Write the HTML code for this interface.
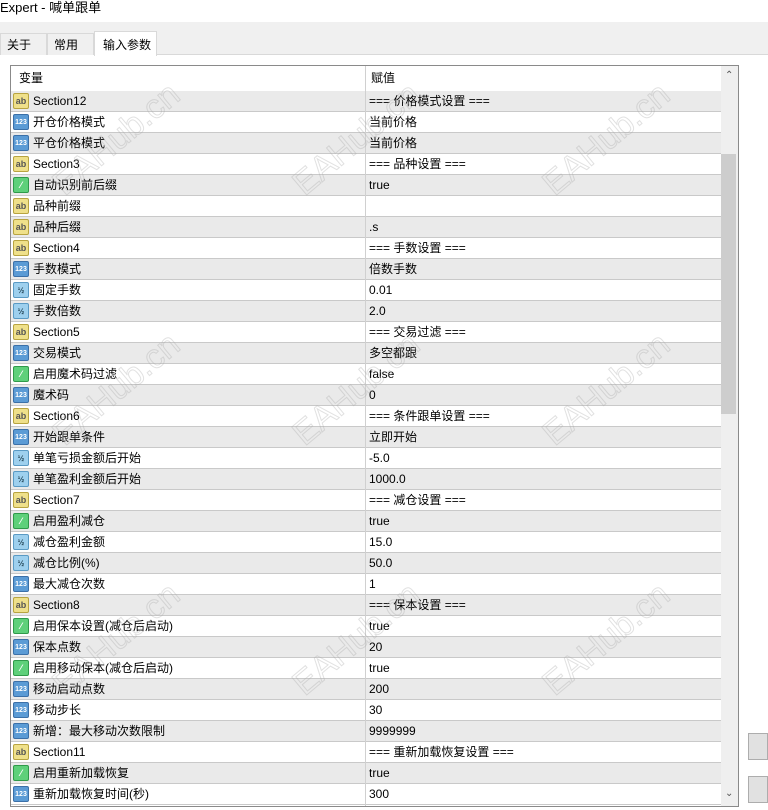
<!DOCTYPE html>
<html><head><meta charset="utf-8">
<style>
*{margin:0;padding:0;box-sizing:border-box}
body{width:768px;height:810px;background:#fff;font-family:"Liberation Sans","Noto Sans CJK SC",sans-serif;font-size:12px;color:#000;position:relative;overflow:hidden}
.title{position:absolute;left:0;top:0;height:22px;line-height:16px;font-size:13px}
.band{position:absolute;left:0;top:22px;width:768px;height:33px;background:#f0f0f0;border-bottom:1px solid #d9d9d9}
.tab{position:absolute;top:33px;height:22px;border:1px solid #d9d9d9;border-bottom:none;background:#f0f0f0;line-height:22px;padding-left:6px;font-size:12px}
.tab.a{top:31px;height:25px;background:#fff;line-height:26px;padding-left:8px}
.list{position:absolute;left:10px;top:65px;width:729px;height:742px;border:1px solid #8a8a8a;overflow:hidden}
.hdr{position:absolute;left:0;top:0;width:710px;height:25px;background:#fff}
.hdr span{position:absolute;top:0;line-height:24px;height:24px}
.row{position:absolute;left:0;width:710px;height:21px;border-bottom:1px solid #c9c9c9}
.g{background:#eaeaea}
.row .n,.row .v{position:absolute;top:0;height:20px;line-height:20px;white-space:nowrap}
.row .n{left:22px}
.row .v{left:358px}
.row .ic{position:absolute;left:2px;top:2px;width:16px;height:16px;border-radius:2px;font-size:9px;font-weight:bold;line-height:15px;text-align:center;font-family:"Liberation Sans",sans-serif}
.s{background:#efe08a;border:1px solid #b8a440;color:#555}
.i{background:#5b9bd5;border:1px solid #3b70a8;color:#fff;font-size:7px!important}
.d{background:#9ed0ee;border:1px solid #5a9ac4;color:#245;font-size:8px!important}
.b{background:#5ed07a;border:1px solid #2f9a4a;color:#fff}
.col{position:absolute;left:354px;top:0;width:1px;height:742px;background:#d0d0d0}
.sb{position:absolute;left:710px;top:0;width:17px;height:740px;background:#efefef}
.th{position:absolute;left:710px;top:88px;width:15px;height:260px;background:#cdcdcd}
.btn{position:absolute;left:748px;width:20px;height:27px;background:#e1e1e1;border:1px solid #adadad}
.wm{position:absolute;font-size:34px;font-family:"Liberation Sans",sans-serif;color:rgba(255,255,255,0);-webkit-text-stroke:1px rgba(170,170,170,.35);transform:rotate(-40deg);white-space:nowrap;pointer-events:none}
</style></head><body>
<div class="title">Expert - 喊单跟单</div>
<div class="band"></div>
<div class="tab" style="left:0;width:47px">关于</div>
<div class="tab" style="left:47px;width:47px">常用</div>
<div class="tab a" style="left:94px;width:63px">输入参数</div>
<div class="list">
<div class="hdr"><span style="left:8px">变量</span><span style="left:360px">赋值</span></div>
<div class="row g" style="top:25px"><div class="ic s">ab</div><span class="n">Section12</span><span class="v">=== 价格模式设置 ===</span></div>
<div class="row" style="top:46px"><div class="ic i">123</div><span class="n">开仓价格模式</span><span class="v">当前价格</span></div>
<div class="row g" style="top:67px"><div class="ic i">123</div><span class="n">平仓价格模式</span><span class="v">当前价格</span></div>
<div class="row" style="top:88px"><div class="ic s">ab</div><span class="n">Section3</span><span class="v">=== 品种设置 ===</span></div>
<div class="row g" style="top:109px"><div class="ic b">⁄</div><span class="n">自动识别前后缀</span><span class="v">true</span></div>
<div class="row" style="top:130px"><div class="ic s">ab</div><span class="n">品种前缀</span><span class="v"></span></div>
<div class="row g" style="top:151px"><div class="ic s">ab</div><span class="n">品种后缀</span><span class="v">.s</span></div>
<div class="row" style="top:172px"><div class="ic s">ab</div><span class="n">Section4</span><span class="v">=== 手数设置 ===</span></div>
<div class="row g" style="top:193px"><div class="ic i">123</div><span class="n">手数模式</span><span class="v">倍数手数</span></div>
<div class="row" style="top:214px"><div class="ic d">½</div><span class="n">固定手数</span><span class="v">0.01</span></div>
<div class="row g" style="top:235px"><div class="ic d">½</div><span class="n">手数倍数</span><span class="v">2.0</span></div>
<div class="row" style="top:256px"><div class="ic s">ab</div><span class="n">Section5</span><span class="v">=== 交易过滤 ===</span></div>
<div class="row g" style="top:277px"><div class="ic i">123</div><span class="n">交易模式</span><span class="v">多空都跟</span></div>
<div class="row" style="top:298px"><div class="ic b">⁄</div><span class="n">启用魔术码过滤</span><span class="v">false</span></div>
<div class="row g" style="top:319px"><div class="ic i">123</div><span class="n">魔术码</span><span class="v">0</span></div>
<div class="row" style="top:340px"><div class="ic s">ab</div><span class="n">Section6</span><span class="v">=== 条件跟单设置 ===</span></div>
<div class="row g" style="top:361px"><div class="ic i">123</div><span class="n">开始跟单条件</span><span class="v">立即开始</span></div>
<div class="row" style="top:382px"><div class="ic d">½</div><span class="n">单笔亏损金额后开始</span><span class="v">-5.0</span></div>
<div class="row g" style="top:403px"><div class="ic d">½</div><span class="n">单笔盈利金额后开始</span><span class="v">1000.0</span></div>
<div class="row" style="top:424px"><div class="ic s">ab</div><span class="n">Section7</span><span class="v">=== 减仓设置 ===</span></div>
<div class="row g" style="top:445px"><div class="ic b">⁄</div><span class="n">启用盈利减仓</span><span class="v">true</span></div>
<div class="row" style="top:466px"><div class="ic d">½</div><span class="n">减仓盈利金额</span><span class="v">15.0</span></div>
<div class="row g" style="top:487px"><div class="ic d">½</div><span class="n">减仓比例(%)</span><span class="v">50.0</span></div>
<div class="row" style="top:508px"><div class="ic i">123</div><span class="n">最大减仓次数</span><span class="v">1</span></div>
<div class="row g" style="top:529px"><div class="ic s">ab</div><span class="n">Section8</span><span class="v">=== 保本设置 ===</span></div>
<div class="row" style="top:550px"><div class="ic b">⁄</div><span class="n">启用保本设置(减仓后启动)</span><span class="v">true</span></div>
<div class="row g" style="top:571px"><div class="ic i">123</div><span class="n">保本点数</span><span class="v">20</span></div>
<div class="row" style="top:592px"><div class="ic b">⁄</div><span class="n">启用移动保本(减仓后启动)</span><span class="v">true</span></div>
<div class="row g" style="top:613px"><div class="ic i">123</div><span class="n">移动启动点数</span><span class="v">200</span></div>
<div class="row" style="top:634px"><div class="ic i">123</div><span class="n">移动步长</span><span class="v">30</span></div>
<div class="row g" style="top:655px"><div class="ic i">123</div><span class="n">新增：最大移动次数限制</span><span class="v">9999999</span></div>
<div class="row" style="top:676px"><div class="ic s">ab</div><span class="n">Section11</span><span class="v">=== 重新加载恢复设置 ===</span></div>
<div class="row g" style="top:697px"><div class="ic b">⁄</div><span class="n">启用重新加载恢复</span><span class="v">true</span></div>
<div class="row" style="top:718px"><div class="ic i">123</div><span class="n">重新加载恢复时间(秒)</span><span class="v">300</span></div>
<div class="col"></div>
<div class="sb"></div><div class="th"></div>
<div style="position:absolute;left:714px;top:4px;font-size:10px;color:#555">&#8963;</div>
<div style="position:absolute;left:714px;top:722px;font-size:10px;color:#555">&#8964;</div>
</div>
<div class="btn" style="top:733px"></div>
<div class="btn" style="top:776px"></div>
<div class="wm" style="left:40px;top:120px">EAHub.cn</div>
<div class="wm" style="left:280px;top:120px">EAHub.cn</div>
<div class="wm" style="left:530px;top:120px">EAHub.cn</div>
<div class="wm" style="left:40px;top:370px">EAHub.cn</div>
<div class="wm" style="left:280px;top:370px">EAHub.cn</div>
<div class="wm" style="left:530px;top:370px">EAHub.cn</div>
<div class="wm" style="left:40px;top:620px">EAHub.cn</div>
<div class="wm" style="left:280px;top:620px">EAHub.cn</div>
<div class="wm" style="left:530px;top:620px">EAHub.cn</div>
</body></html>
